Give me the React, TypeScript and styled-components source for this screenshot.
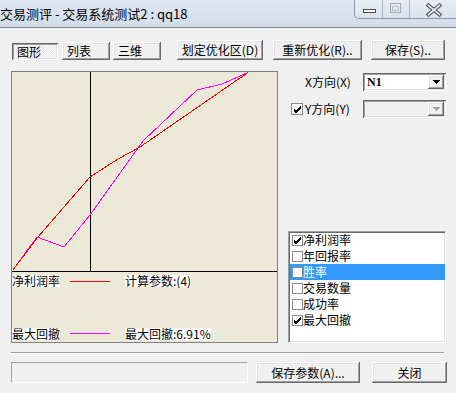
import React from "react";
import styled, { createGlobalStyle, css } from "styled-components";

const GlobalStyle = createGlobalStyle`
  html, body { margin: 0; padding: 0; background: #f0f0f0; }
  body { font-family: "Noto Sans CJK SC", "Noto Sans", sans-serif; }
`;

const FONT = `"Noto Sans CJK SC", "Noto Sans", sans-serif`;

const Window = styled.div`
  width: 456px;
  height: 393px;
  overflow: hidden;
  background: #f0f0f0;
  display: flex;
  flex-direction: column;
  font-family: ${FONT};
  font-size: 12px;
  color: #000;
`;

const TitleBar = styled.div`
  flex: none;
  height: 27px;
  display: flex;
  align-items: flex-start;
  background: linear-gradient(to bottom, #dfe8f3 0%, #d2dde9 100%);
  border-bottom: 1px solid #7f8893;
`;

const TitleText = styled.div`
  line-height: 27px;
  font-size: 13px;
  white-space: nowrap;
  color: #000;
`;

const Controls = styled.div`
  margin-left: auto;
  display: flex;
  height: 18px;
  border: 1px solid #8e9aa9;
  border-top: none;
  border-right: none;
  border-radius: 0 0 0 5px;
  overflow: hidden;
  background: linear-gradient(to bottom, #e8eef6, #d9e2ed);
`;

const ControlButton = styled.div<{ $w: number; $sep?: boolean }>`
  width: ${(p) => p.$w}px;
  height: 18px;
  box-sizing: border-box;
  ${(p) => p.$sep && css`border-left: 1px solid #a9b4c1;`}
  svg { display: block; }
`;

const Toolbar = styled.div`
  flex: none;
  display: flex;
  align-items: flex-end;
  margin-top: 12px;
  padding-left: 12px;
  height: 20px;
`;

const raised = css`
  box-shadow: inset -1px -1px #696969, inset 1px 1px #ffffff,
    inset -2px -2px #a0a0a0, inset 2px 2px #e3e3e3;
`;

const sunken = css`
  box-shadow: inset 1px 1px #696969, inset -1px -1px #ffffff,
    inset 2px 2px #a0a0a0, inset -2px -2px #e3e3e3;
`;

const Button = styled.button<{
  $w: number;
  $h: number;
  $ml?: number;
  $pressed?: boolean;
  $left?: boolean;
}>`
  box-sizing: border-box;
  flex: none;
  width: ${(p) => p.$w}px;
  height: ${(p) => p.$h}px;
  margin: 0 0 0 ${(p) => p.$ml ?? 0}px;
  padding: 0 ${(p) => (p.$left ? "0 0 5px" : "0")};
  font-family: ${FONT};
  font-size: 12px;
  color: #000;
  border: none;
  background: #f0f0f0;
  ${raised}
  display: flex;
  align-items: center;
  justify-content: ${(p) => (p.$left ? "flex-start" : "center")};
  line-height: 1;
  white-space: nowrap;
  ${(p) =>
    p.$pressed &&
    css`
      ${sunken}
      background: repeating-conic-gradient(#ffffff 0 25%, #e4e4e4 0 50%) 0 0 / 2px 2px;
      padding-left: 5px;
      padding-top: 1px;
    `}
`;

const Main = styled.div`
  flex: none;
  display: flex;
  margin-top: 11px;
  padding-left: 11px;
  gap: 10px;
`;

const ChartPanel = styled.div`
  box-sizing: border-box;
  width: 267px;
  height: 272px;
  border: 1px solid #808080;
  background: #ece9d8;
  display: flex;
  flex-direction: column;
`;

const Plot = styled.div`
  flex: none;
  height: 199px;
  border-bottom: 1px solid #000;
  svg { display: block; }
`;

const Legend = styled.div`
  flex: 1;
  display: flex;
  flex-direction: column;
  justify-content: space-between;
  padding: 3px 0 2px;
`;

const LegendRow = styled.div`
  display: grid;
  grid-template-columns: 58px 40px auto;
  align-items: start;
  height: 12px;
`;

const LegendText = styled.span<{ $ml?: number }>`
  justify-self: start;
  display: inline-block;
  height: 12px;
  line-height: 12px;
  background: #fff;
  white-space: nowrap;
  margin-left: ${(p) => p.$ml ?? 0}px;
`;

const Swatch = styled.div<{ $color: string; $mt: number }>`
  height: 1px;
  margin-top: ${(p) => p.$mt}px;
  background: ${(p) => p.$color};
`;

const Side = styled.div`
  width: 158px;
  height: 272px;
  display: flex;
  flex-direction: column;
`;

const FieldRow = styled.div<{ $mt: number }>`
  display: flex;
  align-items: center;
  height: 18px;
  margin-top: ${(p) => p.$mt}px;
  padding-left: 3px;
`;

const CheckSlot = styled.div`
  width: 14px;
  height: 12px;
  flex: none;
`;

const CheckBox = styled.div<{ $size: number }>`
  box-sizing: border-box;
  width: ${(p) => p.$size}px;
  height: ${(p) => p.$size}px;
  flex: none;
  border: 1px solid #8a8a8a;
  background: #fff;
  display: flex;
  align-items: center;
  justify-content: center;
  svg { display: block; }
`;

const FieldLabel = styled.div`
  width: 58px;
  flex: none;
  white-space: nowrap;
  line-height: 18px;
`;

const Combo = styled.div<{ $disabled?: boolean }>`
  box-sizing: border-box;
  width: 83px;
  height: 18px;
  display: flex;
  padding: 2px;
  border: none;
  background: ${(p) => (p.$disabled ? "#f0f0f0" : "#fff")};
  ${sunken}
`;

const ComboText = styled.div`
  flex: 1;
  padding-left: 2px;
  line-height: 14px;
  font-family: "Liberation Serif", serif;
  font-weight: bold;
  font-size: 12px;
`;

const ComboButton = styled.div`
  width: 16px;
  height: 14px;
  box-sizing: border-box;
  background: #f0f0f0;
  ${raised}
  display: flex;
  align-items: center;
  justify-content: center;
  svg { display: block; }
`;

const ListBox = styled.div`
  margin-top: auto;
  box-sizing: border-box;
  width: 158px;
  height: 112px;
  background: #fff;
  border: 1px solid;
  border-color: #a0a0a0 #ffffff #ffffff #a0a0a0;
  box-shadow: inset 1px 1px #696969, inset -1px -1px #e3e3e3;
  padding: 0 0 0 1px;
`;

const ListItem = styled.div<{ $selected?: boolean }>`
  height: 16px;
  display: flex;
  align-items: center;
  padding-left: 2px;
  gap: 0;
  white-space: nowrap;
  line-height: 16px;
  background: ${(p) => (p.$selected ? "#3399ff" : "transparent")};
  color: ${(p) => (p.$selected ? "#fff" : "#000")};
`;

const Separator = styled.div`
  flex: none;
  margin: 9px 0 0 11px;
  width: 433px;
  border-top: 1px solid #a0a0a0;
  border-bottom: 1px solid #ffffff;
`;

const BottomRow = styled.div`
  flex: none;
  display: flex;
  margin-top: 8px;
  padding-left: 11px;
  height: 21px;
`;

const StatusField = styled.div`
  box-sizing: border-box;
  width: 237px;
  height: 21px;
  border: 1px solid;
  border-color: #a0a0a0 #ffffff #ffffff #a0a0a0;
`;

const Check = ({ gray }: { gray?: boolean }) => (
  <svg width="9" height="9" viewBox="0 0 9 9">
    <path
      d="M1 4 L3 6 L8 1 M1 5 L3 7 L8 2 M1 6 L3 8 L8 3"
      stroke={gray ? "#888" : "#000"}
      strokeWidth="1"
      fill="none"
      shapeRendering="crispEdges"
    />
  </svg>
);

const Arrow = ({ color }: { color: string }) => (
  <svg width="7" height="4" viewBox="0 0 7 4">
    <polygon points="0,0 7,0 3.5,4" fill={color} shapeRendering="crispEdges" />
  </svg>
);

const red: [number, number][] = [
  [0.5, 198.5], [26, 165], [78, 105], [106, 87], [128, 75], [236, 0.5],
];
const magenta: [number, number][] = [
  [0.5, 198.5], [25, 165], [52, 175], [78, 143], [131, 69], [185, 18], [210, 12], [236, 0.5],
];
const pts = (a: [number, number][]) => a.map(([x, y]) => `${x},${y}`).join(" ");

const items = [
  { label: "净利润率", checked: true },
  { label: "年回报率", checked: false },
  { label: "胜率", checked: false, selected: true },
  { label: "交易数量", checked: false },
  { label: "成功率", checked: false },
  { label: "最大回撤", checked: true },
];

export default function App() {
  return (
    <Window>
      <GlobalStyle />
      <TitleBar>
        <TitleText>交易测评 - 交易系统测试2 : qq18</TitleText>
        <Controls>
          <ControlButton $w={27}>
            <svg width="27" height="18">
              <rect x="8.5" y="9.5" width="12" height="3" fill="#fff" stroke="#4c4c4c" />
            </svg>
          </ControlButton>
          <ControlButton $w={27} $sep>
            <svg width="26" height="18">
              <rect x="7.5" y="3.5" width="10" height="9" fill="none" stroke="#a3abb5" />
              <rect x="9.5" y="6.5" width="6" height="4" fill="none" stroke="#b9c0c8" />
            </svg>
          </ControlButton>
          <ControlButton $w={47} $sep>
            <svg width="46" height="18">
              <path d="M18.5 5.5 L29.5 14.5 M29.5 5.5 L18.5 14.5" stroke="#5b5f66" strokeWidth="4" strokeLinecap="square" />
              <path d="M18.5 5.5 L29.5 14.5 M29.5 5.5 L18.5 14.5" stroke="#f2f4f7" strokeWidth="1.6" strokeLinecap="square" />
            </svg>
          </ControlButton>
        </Controls>
      </TitleBar>

      <Toolbar>
        <Button $w={46} $h={17} $pressed $left>图形</Button>
        <Button $w={48} $h={18} $ml={4} $left>列表</Button>
        <Button $w={48} $h={18} $ml={3} $left>三维</Button>
        <Button $w={86} $h={20} $ml={16}>划定优化区(D)</Button>
        <Button $w={89} $h={20} $ml={10}>重新优化(R)..</Button>
        <Button $w={74} $h={20} $ml={9}>保存(S)..</Button>
      </Toolbar>

      <Main>
        <ChartPanel>
          <Plot>
            <svg width="265" height="199" viewBox="0 0 265 199">
              <line x1="78.5" y1="0" x2="78.5" y2="199" stroke="#000" strokeWidth="1" shapeRendering="crispEdges" />
              <polyline points={pts(magenta)} fill="none" stroke="#ff00ff" strokeWidth="1" shapeRendering="crispEdges" />
              <polyline points={pts(red)} fill="none" stroke="#ff0000" strokeWidth="1" shapeRendering="crispEdges" />
            </svg>
          </Plot>
          <Legend>
            <LegendRow>
              <LegendText>净利润率</LegendText>
              <Swatch $color="#ff0000" $mt={6} />
              <LegendText $ml={15}>计算参数:(4)</LegendText>
            </LegendRow>
            <LegendRow>
              <LegendText>最大回撤</LegendText>
              <Swatch $color="#ff00ff" $mt={5} />
              <LegendText $ml={15}>最大回撤:6.91%</LegendText>
            </LegendRow>
          </Legend>
        </ChartPanel>

        <Side>
          <FieldRow $mt={2}>
            <CheckSlot />
            <FieldLabel>X方向(X)</FieldLabel>
            <Combo>
              <ComboText>N1</ComboText>
              <ComboButton>
                <Arrow color="#000" />
              </ComboButton>
            </Combo>
          </FieldRow>
          <FieldRow $mt={9}>
            <CheckSlot>
              <CheckBox $size={12}>
                <Check />
              </CheckBox>
            </CheckSlot>
            <FieldLabel>Y方向(Y)</FieldLabel>
            <Combo $disabled>
              <ComboText />
              <ComboButton>
                <Arrow color="#a0a0a0" />
              </ComboButton>
            </Combo>
          </FieldRow>
          <ListBox>
            {items.map((it) => (
              <ListItem key={it.label} $selected={it.selected}>
                <CheckBox $size={11}>{it.checked && <Check />}</CheckBox>
                <span>{it.label}</span>
              </ListItem>
            ))}
          </ListBox>
        </Side>
      </Main>

      <Separator />

      <BottomRow>
        <StatusField />
        <Button $w={104} $h={21} $ml={8}>保存参数(A)...</Button>
        <Button $w={75} $h={21} $ml={12}>关闭</Button>
      </BottomRow>
    </Window>
  );
}
